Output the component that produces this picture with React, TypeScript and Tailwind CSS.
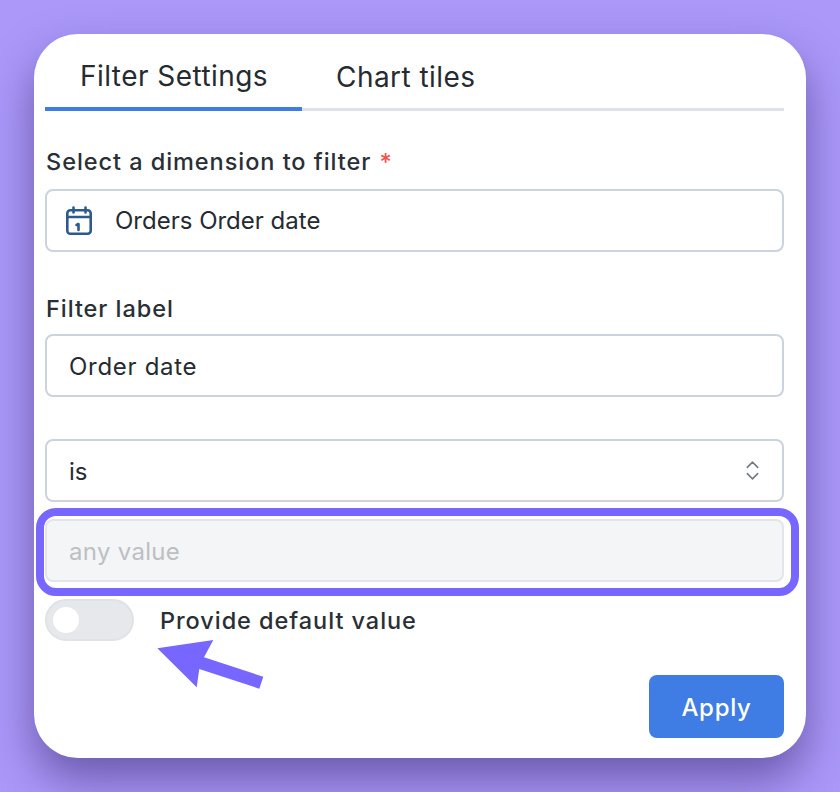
import { ChevronsUpDown } from "lucide-react";

const INPUT = "flex items-center h-[63px] rounded-lg border-2 border-[#ccd3dc] bg-white text-[24px] text-[#262b31]";
const LABEL = "text-[23.5px] leading-[30px] font-medium tracking-[0.95px] text-[#2a2f36]";

function CalendarIcon() {
  return (
    <svg width="26" height="29" viewBox="0 0 26 29" fill="none" stroke="#2d5a8e" strokeWidth="2.6" strokeLinecap="round" strokeLinejoin="round">
      <rect x="1.3" y="4.3" width="23.4" height="23.4" rx="3" />
      <path d="M1.3 11h23.4M7.5 1.5v5M19.5 1.5v5" />
      <path d="M10.5 19l2-1v6" />
    </svg>
  );
}

export default function App() {
  return (
    <div className="w-[840px] h-[792px] bg-[#ab98f9] p-[34px] font-['Inter',sans-serif]">
      <div className="relative w-[772px] h-[724px] rounded-[44px] bg-white px-[11px] shadow-[0_22px_44px_rgba(45,30,100,0.5)]">
        {/* tabs */}
        <div className="flex h-[77px] w-[739px] border-b-[3px] border-[#dfe1e9] text-[28px] tracking-[0.45px] text-[#262b31]">
          <div className="flex items-center h-[77px] -mb-[3px] w-[257px] pl-[35px] pt-[16px] pb-[5px] border-b-4 border-[#3f7de4]">Filter Settings</div>
          <div className="flex items-center h-[74px] pl-[34px] pt-[16px] pb-[5px]">Chart tiles</div>
        </div>

        <div className="w-[739px]">
          <div className={`${LABEL} mt-[36px] pl-px`}>
            Select a dimension to filter <span className="ml-px text-[#ef5350]">*</span>
          </div>
          <div className={`${INPUT} mt-[12px] pl-[19px] gap-[23px]`}>
            <CalendarIcon />
            <span>Orders Order date</span>
          </div>

          <div className={`${LABEL} mt-[42px] pl-px`}>Filter label</div>
          <div className={`${INPUT} mt-[10px] pl-[22px] tracking-[0.7px]`}>
            <span className="pt-[2px]">Order date</span>
          </div>

          <div className={`${INPUT} mt-[42px] pl-[22px] pr-[17px] justify-between`}>
            <span className="pt-[2px]">is</span>
            <ChevronsUpDown size={25} strokeWidth={1.5} className="text-[#737a83]" />
          </div>

          {/* disabled value field with the callout frame over it */}
          <div className="relative mt-[17px]">
            <div className="flex items-center h-[63px] rounded-lg border-2 border-[#e2e5e9] bg-[#f4f5f7] pl-[22px] pt-[2px] text-[24px] tracking-[0.3px] text-[#bdbfc3]">any value</div>
            <div className="absolute -left-[9px] -right-[15px] -top-[11.5px] -bottom-[14px] rounded-[20px] border-[8px] border-[#7766ff] pointer-events-none" />
          </div>

          <div className="flex items-center mt-[17px]">
            <div className="flex items-center w-[89px] h-[42px] rounded-full border-2 border-[#e0e2e6] bg-[#e6e8ec] pl-[6px]">
              <div className="w-[26px] h-[26px] rounded-full bg-white" />
            </div>
            <span className={`${LABEL} ml-[26px] pt-[2px]`}>Provide default value</span>
          </div>

          <div className="flex justify-end mt-[34px]">
            <button className="w-[135px] h-[63px] rounded-lg bg-[#3f7de4] pt-[2px] text-[24px] font-medium tracking-[0.7px] text-white">Apply</button>
          </div>
        </div>

        {/* callout arrow */}
        <svg className="absolute left-[120px] top-[602px]" width="112" height="56" viewBox="0 0 112 56" fill="#7766ff">
          <path d="M3.3 12.3L59.3 4L50 21.3L109.3 40.7L105.3 52.7L45.3 33L42.7 51.3Z" />
        </svg>
      </div>
    </div>
  );
}
